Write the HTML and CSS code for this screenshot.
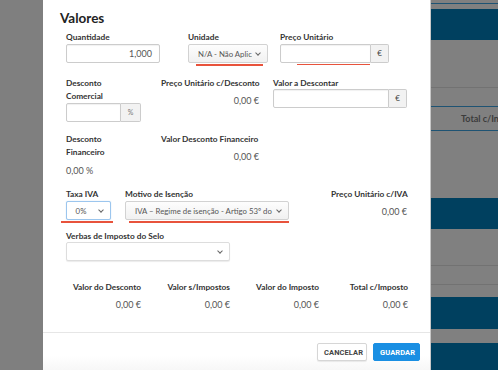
FILE: index.html
```html
<!DOCTYPE html>
<html lang="pt">
<head>
<meta charset="utf-8">
<link rel="stylesheet" href="styles.css">
</head>
<body>
<div class="screen">
  <div class="bg-left"></div>
  <div class="modal">
    <div class="modal-body">
      <h2 class="title">Valores</h2>

      <div class="row row1">
        <div class="cell c-qty">
          <div class="lbl">Quantidade</div>
          <div class="input input-qty">1,000</div>
        </div>
        <div class="cell c-uni">
          <div class="lbl">Unidade</div>
          <div class="select select-uni"><span class="sel-text">N/A - Não Aplicável</span><span class="chev"></span></div>
          <div class="err err-uni"></div>
        </div>
        <div class="cell c-pu">
          <div class="lbl">Preço Unitário</div>
          <div class="group group-pu"><div class="input flex1"></div><div class="addon">€</div></div>
          <div class="err err-pu"></div>
        </div>
      </div>

      <div class="row row2">
        <div class="cell c-dc">
          <div class="lbl lbl-wrap">Desconto Comercial</div>
          <div class="group group-dc"><div class="input flex1"></div><div class="addon addon-pct">%</div></div>
        </div>
        <div class="cell c-pud">
          <div class="lbl nowrap">Preço Unitário c/Desconto</div>
          <div class="val val-r">0,00 €</div>
        </div>
        <div class="cell c-vad">
          <div class="lbl lbl-tight">Valor a Descontar</div>
          <div class="group group-vad"><div class="input flex1"></div><div class="addon">€</div></div>
        </div>
      </div>

      <div class="row row3">
        <div class="cell c-df">
          <div class="lbl lbl-wrap">Desconto Financeiro</div>
          <div class="val val-pct">0,00 %</div>
        </div>
        <div class="cell c-vdf">
          <div class="lbl nowrap">Valor Desconto Financeiro</div>
          <div class="val val-r val-vdf">0,00 €</div>
        </div>
      </div>

      <div class="row row4">
        <div class="cell c-iva">
          <div class="lbl">Taxa IVA</div>
          <div class="select select-iva focus"><span class="sel-text center">0%</span><span class="chev"></span></div>
          <div class="err err-iva"></div>
        </div>
        <div class="cell c-mot">
          <div class="lbl">Motivo de Isenção</div>
          <div class="select select-mot"><span class="sel-text">IVA – Regime de isenção - Artigo 53º do CIVA</span><span class="chev"></span></div>
          <div class="err err-mot"></div>
        </div>
        <div class="cell c-puiva">
          <div class="lbl">Preço Unitário c/IVA</div>
          <div class="val val-r val-iva">0,00 €</div>
        </div>
      </div>

      <div class="row row5">
        <div class="cell c-selo">
          <div class="lbl lbl-tight">Verbas de Imposto do Selo</div>
          <div class="select select-selo plain"><span class="sel-text"></span><span class="chev"></span></div>
        </div>
      </div>

      <div class="row totals">
        <div class="tot"><div class="lbl">Valor do Desconto</div><div class="val">0,00 €</div></div>
        <div class="tot"><div class="lbl">Valor s/Impostos</div><div class="val">0,00 €</div></div>
        <div class="tot"><div class="lbl">Valor do Imposto</div><div class="val">0,00 €</div></div>
        <div class="tot"><div class="lbl">Total c/Imposto</div><div class="val">0,00 €</div></div>
      </div>
    </div>
    <div class="modal-footer">
      <button class="btn btn-default">CANCELAR</button>
      <button class="btn btn-primary">GUARDAR</button>
    </div>
  </div>
  <div class="bg-right">
    <div class="b b-g" style="height:3px"></div>
    <div class="b b-line-blue"></div>
    <div class="b b-g" style="height:5px"></div>
    <div class="b b-dark" style="height:31px"></div>
    <div class="b b-g" style="height:47px"></div>
    <div class="b b-line-gray"></div>
    <div class="b b-g" style="height:18px"></div>
    <div class="b b-line-blue"></div>
    <div class="b b-g b-text" style="height:23px">Total c/In</div>
    <div class="b b-line-blue"></div>
    <div class="b b-g" style="height:67px"></div>
    <div class="b b-dark" style="height:31px"></div>
    <div class="b b-g" style="height:36px"></div>
    <div class="b b-line-gray"></div>
    <div class="b b-g" style="height:18px"></div>
    <div class="b b-line-gray"></div>
    <div class="b b-g" style="height:12px"></div>
    <div class="b b-dark" style="height:32px"></div>
    <div class="b b-g" style="height:14px"></div>
    <div class="b b-dark" style="height:30px"></div>
  </div>
</div>
</body>
</html>
```

FILE: styles.css
```css
* { box-sizing: border-box; }
html, body { margin: 0; padding: 0; }
body {
  width: 498px;
  height: 370px;
  overflow: hidden;
  background: #7f7f7f;
  font-family: Lato, "Liberation Sans", Arial, sans-serif;
  color: #333;
}
.screen { display: flex; width: 498px; height: 370px; }
.bg-left { width: 43px; flex: none; background: #7f7f7f; }
.modal {
  width: 388px;
  flex: none;
  background: #fff;
  border-right: 1px solid #c8c8c8;
  display: flex;
  flex-direction: column;
}
.bg-right { flex: 1; background: #7f7f7f; display: flex; flex-direction: column; overflow: hidden; }
.b { flex: none; }
.b-g { background: #808080; }
.b-dark { background: #00405f; }
.b-line-blue { height: 1px; background: #1e5373; }
.b-line-gray { height: 1px; background: #727272; }
.b-text {
  font-size: 9px;
  font-weight: 700;
  color: #3c3c3c;
  padding-left: 30px;
  line-height: 23px;
  white-space: nowrap;
}

.modal-body { padding: 10px 0 0 17px; height: 332px; flex: none; }
.title {
  margin: 0;
  font-size: 13.5px;
  line-height: 16px;
  font-weight: 700;
  color: #222;
}

.row { display: flex; padding-left: 6px; }
.cell { position: relative; flex: none; }
.lbl {
  font-size: 8.3px;
  line-height: 13px;
  font-weight: 700;
  color: #333;
}
.lbl-tight { line-height: 12px; }
.nowrap { white-space: nowrap; }
.val { font-size: 9px; line-height: 13px; color: #555; }
.val-r { text-align: right; }

.input {
  height: 19px;
  border: 1px solid #ccc;
  border-radius: 2px;
  background: #fff;
  box-shadow: inset 0 1px 1px rgba(0,0,0,0.06);
  font-size: 9px;
  line-height: 17px;
  color: #555;
  padding: 0 7px;
}
.input-qty { width: 94px; text-align: right; }
.flex1 { flex: 1; border-radius: 2px 0 0 2px; }
.group { display: flex; height: 19px; }
.addon {
  width: 18px;
  flex: none;
  border: 1px solid #ccc;
  border-left: none;
  border-radius: 0 2px 2px 0;
  background: #f2f2f2;
  font-size: 8px;
  line-height: 17px;
  text-align: center;
  color: #444;
}
.addon-pct { width: 20px; font-size: 7px; color: #777; }

.select {
  height: 19px;
  border: 1px solid #d2d2d2;
  border-radius: 2px;
  background: linear-gradient(#fdfdfd, #f1f1f1);
  display: flex;
  align-items: center;
  padding: 0 5px 0 9px;
  overflow: hidden;
}
.select.focus { border-color: #9cc6ee; background: #fff; box-shadow: 0 0 1px rgba(102,175,233,0.5); }
.select.plain { background: #fff; border-color: #ddd; box-shadow: 0 1px 1px rgba(0,0,0,0.08); }
.sel-text {
  flex: 1;
  font-size: 7.8px;
  color: #555;
  white-space: nowrap;
  overflow: hidden;
}
.sel-text.center { text-align: center; padding-right: 4px; }
.chev {
  flex: none;
  width: 4px;
  height: 4px;
  border-right: 1px solid #666;
  border-bottom: 1px solid #666;
  transform: rotate(45deg);
  margin: 0 2px 2px 4px;
}
.err { position: absolute; height: 1.5px; background: #e8533c; }

/* row 1 */
.row1 { margin-top: 5px; height: 46px; }
.c-qty { width: 122px; }
.c-uni { width: 92px; }
.select-uni { width: 80px; }
.err-uni { left: 8px; top: 33px; width: 67px; }
.c-pu { width: 109px; }
.group-pu { width: 109px; }
.err-pu { left: 17px; top: 32.5px; width: 73px; }

/* row 2 */
.row2 { height: 56px; }
.c-dc { width: 95px; }
.lbl-wrap { width: 60px; }
.group-dc { width: 75px; }
.c-pud { width: 112px; }
.c-pud .lbl { width: 98px; }
.c-pud .val { width: 98px; margin-top: 4px; }
.c-vad { width: 134px; }
.group-vad { width: 134px; }

/* row 3 */
.row3 { height: 55px; }
.c-df { width: 95px; }
.val-pct { margin-top: 5px; }
.c-vdf { width: 98px; }
.val-vdf { margin-top: 4px; }

/* row 4 */
.row4 { height: 42px; }
.c-iva { width: 59px; }
.select-iva { width: 45px; padding-left: 4px; }
.err-iva { left: -5px; top: 33px; width: 52px; }
.c-mot { width: 206px; }
.select-mot { width: 164px; }
.err-mot { left: 4px; top: 33px; width: 160px; }
.c-puiva { width: 76px; }
.c-puiva .lbl { text-align: right; white-space: nowrap; }
.val-iva { margin-top: 4px; }

/* row 5 */
.row5 { height: 51px; }
.select-selo { width: 164px; }

/* totals */
.totals { padding-left: 0; margin-left: -8px; }
.tot { width: 89px; text-align: right; }
.tot .val { margin-top: 4px; }

.modal-footer {
  flex: 1;
  border-top: 1px solid #e6e6e6;
  background: linear-gradient(#fff 60%, #f7f7f7);
  display: flex;
  justify-content: flex-end;
  align-items: flex-start;
  padding: 10px 10px 0 0;
  gap: 6px;
}
.btn {
  height: 18px;
  font-family: Roboto, "Liberation Sans", Arial, sans-serif;
  font-size: 7.5px;
  font-weight: 700;
  letter-spacing: 0.1px;
  border-radius: 2px;
  padding: 0 6px;
  margin: 0;
  cursor: pointer;
}
.btn-default { width: 50px; background: #fff; border: 1px solid #d6d6d6; color: #444; box-shadow: 0 1px 1px rgba(0,0,0,0.08); }
.btn-primary { width: 47px; background: #1a8fe3; border: 1px solid #1a8fe3; color: #fff; }
```
